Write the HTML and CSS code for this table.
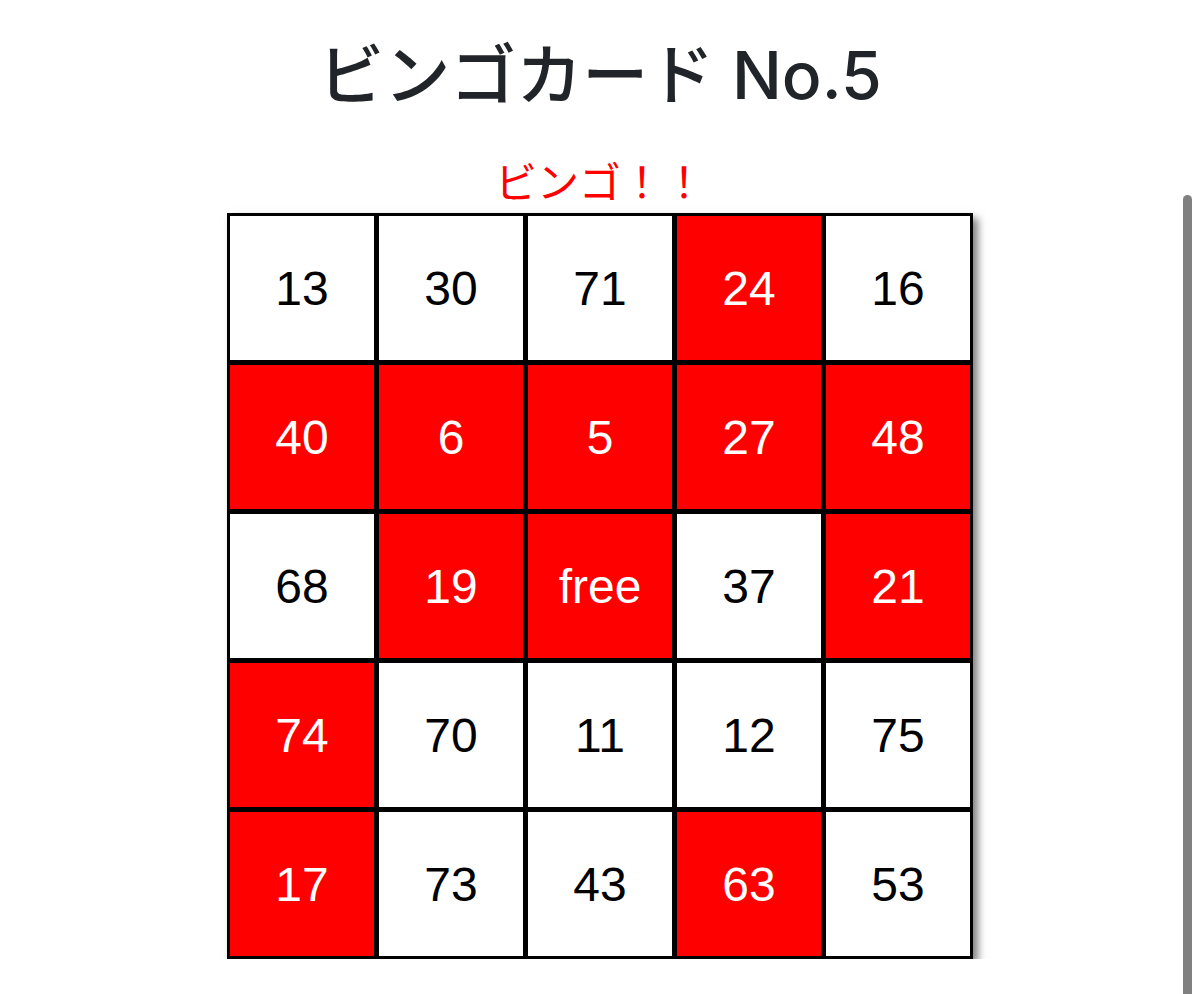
FILE: index.html
```html
<!DOCTYPE html>
<html lang="ja">
<head>
<meta charset="utf-8">
<title>ビンゴカード No.5</title>
<link rel="stylesheet" href="styles.css">
</head>
<body>
<main class="page">
  <h1 class="title">ビンゴカード No.5</h1>
  <p class="status">ビンゴ！！</p>
  <div class="board">
    <div class="cell">13</div>
    <div class="cell">30</div>
    <div class="cell">71</div>
    <div class="cell hit">24</div>
    <div class="cell">16</div>

    <div class="cell hit">40</div>
    <div class="cell hit">6</div>
    <div class="cell hit">5</div>
    <div class="cell hit">27</div>
    <div class="cell hit">48</div>

    <div class="cell">68</div>
    <div class="cell hit">19</div>
    <div class="cell hit">free</div>
    <div class="cell">37</div>
    <div class="cell hit">21</div>

    <div class="cell hit">74</div>
    <div class="cell">70</div>
    <div class="cell">11</div>
    <div class="cell">12</div>
    <div class="cell">75</div>

    <div class="cell hit">17</div>
    <div class="cell">73</div>
    <div class="cell">43</div>
    <div class="cell hit">63</div>
    <div class="cell">53</div>
  </div>
</main>
<div class="scroll-indicator"></div>
</body>
</html>
```

FILE: styles.css
```css
html, body {
  margin: 0;
  padding: 0;
  background: #ffffff;
}

body {
  font-family: "Liberation Sans", "Noto Sans CJK JP", sans-serif;
  overflow: hidden;
}

.page {
  display: flex;
  flex-direction: column;
  align-items: center;
  padding-top: 30px;
}

.title {
  margin: 0;
  font-family: "Inter", "Noto Sans CJK JP", sans-serif;
  font-weight: 500;
  font-size: 66px;
  line-height: 90px;
  color: #212529;
}

.status {
  margin: 35px 0 0;
  font-family: "Noto Sans CJK JP", sans-serif;
  font-size: 42px;
  line-height: 50px;
  color: #ff0000;
}

.board {
  margin-top: 8px;
  display: grid;
  grid-template-columns: repeat(5, 144px);
  grid-auto-rows: 144px;
  gap: 5px;
  padding: 3px;
  background: #000000;
  box-shadow: 5px 5px 8px rgba(0, 0, 0, 0.5);
}

.cell {
  display: flex;
  align-items: center;
  justify-content: center;
  background: #ffffff;
  color: #000000;
  font-size: 48px;
  line-height: 1;
  padding-top: 2px;
}

.cell.hit {
  background: #ff0000;
  color: #ffffff;
}

.scroll-indicator {
  position: fixed;
  top: 195px;
  right: 8px;
  bottom: 0;
  width: 9px;
  background: #808080;
  border-radius: 5px 5px 0 0;
}
```
